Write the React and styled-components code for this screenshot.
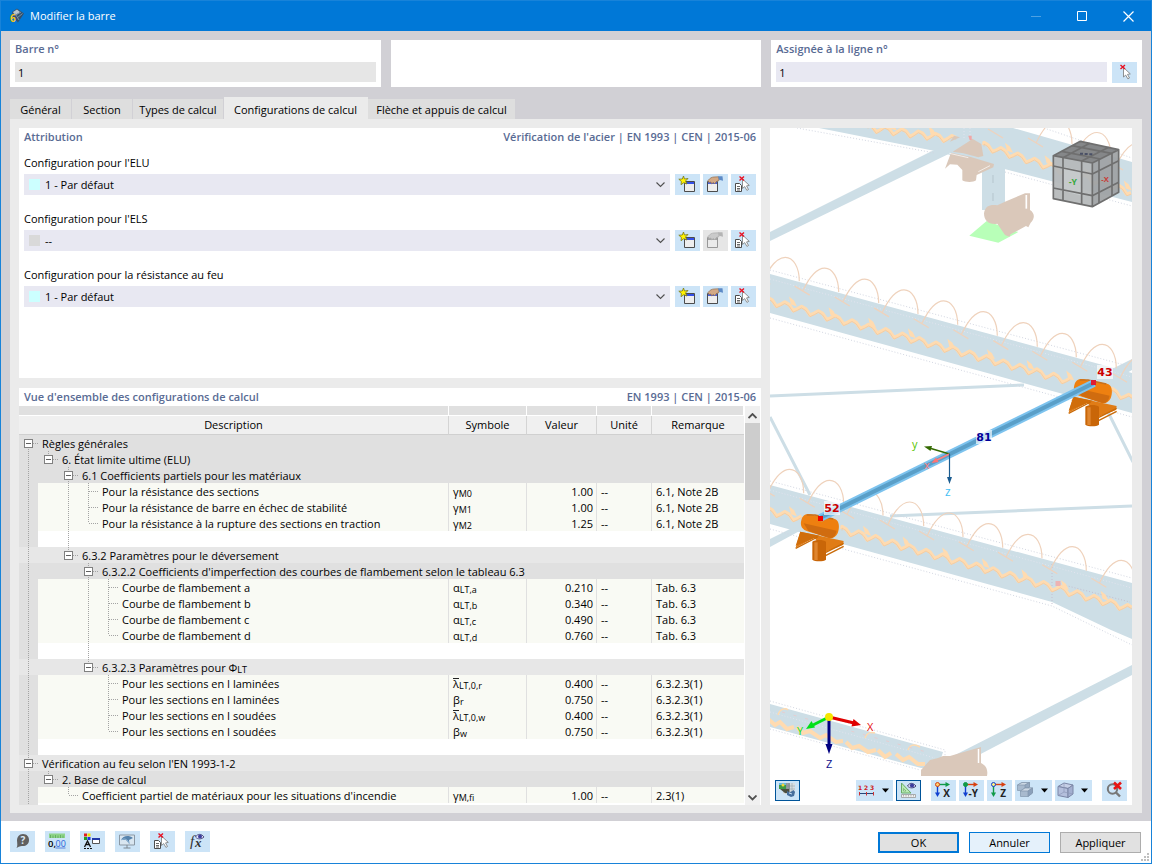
import React from "react";
import styled, { createGlobalStyle, css } from "styled-components";

const GlobalStyle = createGlobalStyle`
  * {
    box-sizing: border-box;
  }

  body {
    margin: 0;
    background: #d1d0d5;
    color: #000;
    font-family: "Open Sans", "Noto Sans", sans-serif;
    font-size: 11px;
    line-height: 16px;
  }

  button, input, select {
    font: inherit;
    color: inherit;
  }
`;

const Window = styled.div`
  display: flex;
  flex-direction: column;
  height: 100vh;
  min-height: 600px;
  border: 1px solid #1883d9;
`;

const TitleBar = styled.header`
  display: flex;
  align-items: center;
  height: 30px;
  flex: none;
  padding-left: 8px;
  background: #0078d7;
  color: white;
`;

const Caption = styled.h1`
  flex: 1;
  margin: 0 0 0 5px;
  font-size: 11px;
  font-weight: 400;
`;

const CaptionButton = styled.button`
  width: 46px;
  height: 30px;
  padding: 0;
  border: 0;
  background: none;
  opacity: ${({ $dim }) => ($dim ? 0.3 : 1)};

  svg {
    display: block;
    margin: auto;
  }
`;

const TopRow = styled.div`
  display: grid;
  grid-template-columns: repeat(3, minmax(0, 1fr));
  gap: 10px;
  flex: none;
  height: 47px;
  margin: 9px 9px 10px;
`;

const Panel = styled.section`
  background: white;
  padding: 0 5px;
`;

const PanelHeader = styled.div`
  display: flex;
  justify-content: space-between;
  height: 18px;
  line-height: 18px;
  color: #596b94;
  font-weight: 600;
`;

const PanelTitle = styled.h2`
  margin: 0;
  font-size: 11px;
  font-weight: 600;
`;

const FieldRow = styled.div`
  display: flex;
  gap: 5px;
  padding-top: 4px;
`;

const TextInput = styled.input`
  flex: 1;
  min-width: 0;
  height: 20px;
  padding: 1px 3px 0;
  border: 0;
  border-radius: 0;
  background: ${(props) => (props.readOnly ? "#e6e6e6" : "#e8e8f2")};
`;

const IconButton = styled.button`
  display: flex;
  align-items: center;
  justify-content: center;
  flex: none;
  width: ${({ $wide }) => ($wide ? "37px" : "25px")};
  height: 21px;
  padding: 0;
  border: 0;
  background: #cce4f7;

  &:disabled {
    background: #e6e6e6;
    filter: grayscale(1);
  }

  &:disabled svg {
    opacity: 0.5;
  }

  ${({ $active }) =>
    $active &&
    css`
      box-shadow: inset 0 0 0 1px #005499;
    `}
`;

const Tabs = styled.nav`
  display: flex;
  align-items: flex-end;
  flex: none;
  height: 22px;
  margin: 0 9px;
`;

const Tab = styled.button`
  height: ${({ $active }) => ($active ? "22px" : "20px")};
  padding: ${({ $active }) => ($active ? "4px 0 0" : "2px 0 0")};
  width: ${({ $width }) => $width}px;
  border: 0;
  border-right: 1px solid ${({ $active }) => ($active ? "#ebebeb" : "#d1d0d5")};
  background: ${({ $active }) => ($active ? "#ebebeb" : "#dedede")};
  white-space: nowrap;
`;

const Content = styled.main`
  display: grid;
  grid-template-columns: minmax(0, 1fr) 362px;
  gap: 9px;
  flex: 1;
  min-height: 0;
  margin: 0 9px 8px;
  padding: 9px 10px 8px 9px;
  background: #ebebeb;
`;

const LeftColumn = styled.div`
  display: grid;
  grid-template-rows: 250px minmax(0, 1fr);
  gap: 10px;
  min-height: 0;
`;

const ConfigField = styled.div`
  margin-top: 9px;
  padding-bottom: 10px;

  & + & {
    margin-top: 0;
  }
`;

const FieldLabel = styled.label`
  display: block;
  height: 19px;
  line-height: 16px;
`;

const FieldControls = styled.div`
  display: flex;
  gap: 3px;
  height: 27px;
`;

const SelectBox = styled.div`
  display: flex;
  align-items: center;
  flex: 1;
  height: 21px;
  margin-right: 2px;
  padding: 0 5px;
  background: #e8e8f2;
`;

const Swatch = styled.span`
  width: 11px;
  height: 11px;
  margin-right: 5px;
  background: ${({ $color }) => $color};
`;

const Select = styled.select`
  flex: 1;
  height: 21px;
  padding: 0;
  border: 0;
  background: none;
  appearance: none;
`;

const Overview = styled.section`
  display: flex;
  flex-direction: column;
  min-height: 0;
  background: white;

  ${PanelHeader} {
    flex: none;
    padding: 0 5px;
  }
`;

const TableArea = styled.div`
  display: flex;
  flex: 1;
  min-height: 0;
  gap: 1px;
  padding-right: 1px;
`;

const TableClip = styled.div`
  flex: 1;
  min-width: 0;
  overflow: hidden;
`;

const Table = styled.table`
  width: 100%;
  table-layout: fixed;
  border-collapse: separate;
  border-spacing: 0;

  td {
    height: 16px;
    padding: 0;
    white-space: nowrap;
    line-height: 15px;
  }
`;

const TopCell = styled.td`
  border-bottom: 1px solid white;
  border-right: 1px solid white;
  background: #e0e0e0;

  && {
    height: 10px;
    line-height: 9px;
  }
`;

const HeadCell = styled.th`
  height: 19px;
  padding: 0;
  border-right: 1px solid #d4d4d4;
  border-bottom: 1px solid #d0d0d0;
  background: #f0f0f0;
  font-weight: 400;
  line-height: 18px;

  &:last-child {
    border-right: 0;
  }
`;

const GroupCell = styled.td`
  background: ${({ $light }) => ($light ? "#e7e7e7" : "#e0e0e0")};
`;

const Cell = styled.td`
  overflow: hidden;
  border-right: 1px solid #e0e0e0;
  background: #f9faf4;
  text-align: ${({ $align }) => $align || "left"};

  && {
    padding: ${({ $flush }) => ($flush ? "0" : "1px 3px 0 4px")};
  }

  &:last-child {
    border-right: 0;
  }
`;

const TreeLine = styled.div`
  display: flex;
  height: 16px;
`;

const vertical = "repeating-linear-gradient(#a4a4a4 0 1px, transparent 1px 2px)";
const horizontal =
  "repeating-linear-gradient(90deg, #a4a4a4 0 1px, transparent 1px 2px)";

const Guide = styled.span`
  display: flex;
  align-items: center;
  flex: none;
  width: ${({ $first }) => ($first ? "19px" : "20px")};
  height: 16px;
  padding-left: ${({ $first }) => ($first ? "5px" : "6px")};
  background-color: ${({ $first, $leaf }) =>
    $first && $leaf ? "#e0e0e0" : "transparent"};
  background-image: ${({ $up, $down, $branch }) =>
    [
      $up ? vertical : "none",
      $down ? vertical : "none",
      $branch ? horizontal : "none",
    ].join(", ")};
  background-repeat: no-repeat;
  background-size: 1px 8px, 1px 8px, 10px 1px;
  background-position: ${({ $first }) =>
    $first ? "9px 0, 9px 8px, 10px 8px" : "10px 0, 10px 8px, 11px 8px"};
`;

const Toggle = styled.button`
  width: 9px;
  height: 9px;
  padding: 0;
  border: 1px solid #808080;
  background: linear-gradient(#606060, #606060) center / 5px 1px no-repeat white;
`;

const TreeText = styled.span`
  padding-left: 4px;
  line-height: 17px;
`;

const Sub = styled.span`
  font-size: 9px;
  line-height: 8px;
  vertical-align: -1px;
`;

const Barred = styled.span`
  display: inline-block;
  height: 11px;
  border-top: 1px solid #222;
  line-height: 10px;
`;

const ScrollBar = styled.div`
  display: flex;
  flex-direction: column;
  width: 15px;
  background: #f0f0f0;
`;

const ScrollButton = styled.button`
  height: 17px;
  padding: 0;
  border: 0;
  background: none;
`;

const ScrollTrack = styled.div`
  flex: 1;
`;

const ScrollThumb = styled.div`
  height: 77px;
  background: #cdcdcd;
`;

const Viewer = styled.section`
  display: flex;
  flex-direction: column;
  min-height: 0;
  background: white;
`;

const Scene = styled.svg`
  display: block;
  flex: 1;
  min-height: 0;
  width: 100%;
`;

const ViewerTools = styled.div`
  display: flex;
  flex: none;
  gap: 3px;
  padding: 4px 5px;
`;

const ToolGroup = styled.div`
  display: flex;
  gap: 3px;
  margin-left: ${({ $push }) => ($push ? "auto" : "7px")};
`;

const Footer = styled.footer`
  display: flex;
  flex: none;
  height: 42px;
  padding: 10px 0 0 9px;
  background: white;
`;

const FooterTools = styled.div`
  display: flex;
  gap: 10px;
  flex: 1;
`;

const FooterButtons = styled.div`
  display: flex;
  gap: 10px;
  padding-top: 1px;
`;

const DialogButton = styled.button`
  width: 81px;
  height: 21px;
  padding: 0;
  border: ${({ $kind }) =>
    $kind === "default"
      ? "2px solid #0078d7"
      : $kind === "hover"
      ? "1px solid #0078d7"
      : "1px solid #adadad"};
  background: ${({ $kind }) => ($kind === "hover" ? "#e5f1fb" : "#e1e1e1")};
`;

const Grip = styled.svg`
  align-self: flex-end;
  margin: 0 1px 1px 0;
`;

/* ---------- icons, all on the 25 x 21 button grid ---------- */

const Icon = ({ children, width = 25 }) => (
  <svg width={width} height="21" viewBox={`0 0 ${width} 21`} aria-hidden="true">
    {children}
  </svg>
);

const Pointer = ({ x, y }) => (
  <path
    transform={`translate(${x} ${y})`}
    d="M0 0V9.5L2.2 7.6L4.4 11.4L6 10.5L4 6.9L6.8 6.4Z"
    fill="white"
    stroke="#777"
    strokeWidth=".8"
  />
);

const RedCross = ({ x, y }) => (
  <path d={`M${x} ${y}l4.500 4m0 -4l-4.500 4`} stroke="#e81123" strokeWidth="1.4" />
);

const SheetLines = ({ x, y }) => (
  <g transform={`translate(${x} ${y})`}>
    <path d="M.5 .5H4.5L6.5 2.5V8.5H.5Z" fill="white" stroke="#4c4c4c" />
    <path d="M2 3.5H5M2 5.5H5M2 7H5" stroke="#444" strokeWidth=".8" />
  </g>
);

const PickIcon = () => (
  <Icon>
    <Pointer x={11.5} y={5.5} />
    <RedCross x={8.5} y={3} />
  </Icon>
);

const PickSheetIcon = () => (
  <Icon>
    <SheetLines x={4} y={9} />
    <Pointer x={11.5} y={5} />
    <RedCross x={8.5} y={2.5} />
  </Icon>
);

const NewIcon = () => (
  <Icon>
    <path d="M9.5 7.5H19.5V17.5H9.5Z" fill="#eee" stroke="#4c4c4c" />
    <path d="M10 8H19V10H10Z" fill="#3350e8" />
    <path
      d="M8.500 2L9.500 5L13 4.500L10.500 7L12 10L8.800 8.700L6 10.700L6.400 7.500L3.800 5.200L7.300 5Z"
      fill="#fff200"
      stroke="#77771c"
      strokeWidth=".8"
    />
  </Icon>
);

const EditIcon = () => (
  <Icon>
    <path d="M4.5 7.5H14.5V17.5H4.5Z" fill="#eee" stroke="#4c4c4c" />
    <path d="M5 8H14V10H5Z" fill="#4a62dd" />
    <path
      d="M5 6.5C7 4 9 3 11 3L15.5 2.8L16 6.5L13.5 7.5L11.5 10L10.5 8.5L8.5 9.8L8 8L6 8.5Z"
      fill="#d3a985"
      stroke="#8f6c4d"
      strokeWidth=".7"
    />
    <path d="M15 2.2H19.5L20 6.8L16 5.8Z" fill="#5d8ac6" />
  </Icon>
);

const HelpIcon = () => (
  <Icon>
    <path
      d="M13 3C17 3 19 6 19 9C19 13 16 15 13 15C11.5 15 10 15 6.5 17C7.8 14.8 7.2 13 7 9.5C7 6 9 3 13 3Z"
      fill="#606060"
    />
    <text x="10.5" y="12.7" fontSize="10" fontWeight="700" fill="#dcebf7">?</text>
  </Icon>
);

const UnitsIcon = () => (
  <Icon>
    <path d="M4 2.5H20V7H4Z" fill="#8fd48a" />
    <path d="M5.5 4V7M8 4.5V7M10.5 4V7M13 4.5V7M15.5 4V7M18 4.5V7" stroke="#5ba858" strokeWidth=".8" />
    <text x="3" y="15.5" fontSize="9.5" fontWeight="600">0,</text>
    <text x="10.5" y="15.5" fontSize="9" fill="#2563d9">00</text>
    <path d="M10.5 17H20.5" stroke="#5b82d9" />
  </Icon>
);

const DisplayIcon = () => (
  <Icon>
    <path d="M4 2.5H7V5.5H4Z" fill="#e02020" />
    <path d="M7.5 2.5H10.5V5.5H7.5Z" fill="#f0e000" />
    <path d="M4 6H7V9H4Z" fill="#20a020" />
    <path d="M7.5 6H10.5V9H7.5Z" fill="#2030e0" />
    <path d="M4.5 16L7.5 10L10.5 16M5.5 13.5H9.5" stroke="#111" strokeWidth="1.3" fill="none" />
    <path d="M4 17.5H12" stroke="#111" strokeDasharray="2 1" />
    <path d="M12.5 7.5H19.5V12.5H12.5Z" fill="white" stroke="#555" />
    <path d="M12 8H20" stroke="#2238a8" strokeWidth="2" />
  </Icon>
);

const MonitorIcon = () => (
  <Icon>
    <path d="M4.5 4H19.5V14H4.5Z" fill="#d9e6f0" stroke="#8b98a4" />
    <path d="M12 14V17M8.5 17H15.5" stroke="#7d8790" />
    <path d="M6 9C8 5 13 3.5 18 7L14 9L14.5 13L11 9Z" fill="#5583ad" />
    <path d="M6 9C10 7 12 8 14.5 13" stroke="#a2c3df" fill="none" />
  </Icon>
);

const FormulaIcon = () => (
  <Icon>
    <text x="5" y="15" fontFamily="Liberation Serif" fontSize="15" fontStyle="italic" fill="#333">
      f
    </text>
    <text x="10" y="16" fontFamily="Liberation Serif" fontSize="13" fontStyle="italic" fontWeight="700" fill="#333">
      x
    </text>
    <path d="M10.5 6C12.5 2.5 16.5 2.5 19 6C16.5 8.5 12.5 8.5 10.5 6Z" fill="#e4e4fa" stroke="#444477" strokeWidth=".9" />
    <circle cx="15" cy="5.5" r="2" fill="#3c3c9c" />
  </Icon>
);

const RenderIcon = () => (
  <Icon>
    <path d="M8 3H20V14H8Z" fill="#d8dee2" />
    <path d="M11 3V14M14 3V14M17 3V14M8 6H20M8 9H20M8 12H20" stroke="#9aa4ab" strokeWidth=".6" />
    <path d="M4 3H11V9H4Z" fill="#3d9a46" />
    <path d="M4 3H11V5H4Z" fill="#67b8e0" />
    <circle cx="8" cy="5" r="1.5" fill="#f6d736" />
    <path d="M11 3H15V12H11Z" fill="#6c7378" opacity=".6" />
    <path d="M5 9H14V13H10Z" fill="#4c4f3f" />
    <path d="M12 11L15 12.5L18.500 10L20 12L19 16L16 17L12 15Z" fill="#456e9d" />
    <path d="M14 13L17 14" stroke="#c5dbee" />
  </Icon>
);

const NumberingIcon = () => (
  <Icon>
    <g fontFamily="DejaVu Sans" fontSize="6" fontWeight="700" fill="#cc2020">
      <text x="2" y="10">1</text>
      <text x="8" y="10">2</text>
      <text x="14" y="10">3</text>
    </g>
    <path d="M3 13.5H18" stroke="#25457a" />
    <path d="M3.5 12V15.5M10.5 12V15.5M17.5 12V15.5" stroke="#d03030" />
  </Icon>
);

const MeasureIcon = () => (
  <Icon>
    <path d="M5.5 3L15 13H5.5Z" fill="#b9eab5" stroke="#6aab66" />
    <path d="M7.5 8.5L10 11H7.5Z" fill="#e9f7e8" stroke="#6aab66" strokeWidth=".7" />
    <path d="M5.5 14.5H19.5V17.5H5.5Z" fill="#f1f1f1" stroke="#999" strokeWidth=".8" />
    <path d="M7.5 15V16.5M10 15V16.5M12.5 15V16.5M15 15V16.5M17.5 15V16.5" stroke="#888" strokeWidth=".6" />
    <path d="M11.5 6C13.5 2.5 17 2.5 20 6C17.5 8.5 14 8.5 11.5 6Z" fill="#e4e4fa" stroke="#444477" />
    <circle cx="16" cy="5.5" r="2.1" fill="#3c3c9c" />
  </Icon>
);

const AxisIcon = ({ label, dot, right, down }) => (
  <Icon>
    <path d="M6.5 4.5H16" stroke={right} strokeWidth="1.4" />
    <path d="M14.5 2L19 4.5L14.5 7Z" fill={right} />
    <path d="M6.5 4.5V14" stroke={down} strokeWidth="1.4" />
    <path d="M4 12.5L6.5 17L9 12.5Z" fill={down} />
    <circle cx="6.5" cy="4.5" r="2" fill={dot} stroke={dot === "#fff080" ? "#1040d0" : dot === "#ffd070" ? "#d84010" : dot} />
    <text x="19" y="16.5" textAnchor="end" fontSize="10" fontWeight="700" fill="#222">
      {label}
    </text>
  </Icon>
);

const SolidIcon = () => (
  <Icon>
    <g stroke="#8296ae" strokeWidth=".7">
      <path d="M2.5 5L7 2.5H14.5V7L10 10.500H2.5Z" fill="#a8bace" />
      <path d="M2.5 5L7 2.5H14.5L10 5Z" fill="#ccd8e4" />
      <path d="M10 5L14.500 2.500V7L10 10.500Z" fill="#94a8c0" />
      <path d="M5.5 11L10 8H17.5V13L13 16.500H5.500Z" fill="#a8bace" />
      <path d="M5.5 11L10 8H17.5L13 11Z" fill="#ccd8e4" />
      <path d="M13 11L17.5 8V13L13 16.500Z" fill="#8ba0ba" />
    </g>
  </Icon>
);

const BoxIcon = () => (
  <Icon>
    <path d="M3 6.500L9 3L18 5L13 8.500Z" fill="#c6cfe6" stroke="#7b86a6" />
    <path d="M3 6.500L13 8.500V17.500L3 15.500Z" fill="#b4bfdc" stroke="#7b86a6" />
    <path d="M13 8.500L18 5V14L13 17.500Z" fill="#a3afd0" stroke="#7b86a6" />
    <path d="M9 3V12L18 14M9 12L3 15.500" fill="none" stroke="#8d98b8" strokeWidth=".7" />
  </Icon>
);

const ResetIcon = () => (
  <Icon>
    <circle cx="10.5" cy="9" r="4.7" fill="none" stroke="#777" strokeWidth="2" />
    <path d="M13.5 12L18 16.5" stroke="#777" strokeWidth="2.4" />
    <path d="M12 2.5L19 9M19 2.5L12 9" stroke="#e81414" strokeWidth="2.6" />
  </Icon>
);

const DropArrow = () => (
  <svg width="12" height="21" viewBox="0 0 12 21" aria-hidden="true">
    <path d="M1 8.5H8L4.5 12.5Z" fill="#000" />
  </svg>
);

const Chevron = ({ up }) => (
  <svg width="9" height="6" viewBox="0 0 9 6" aria-hidden="true">
    <path
      d={up ? "M.5 5L4.5 1L8.5 5" : "M.5 .5L4.5 4.5L8.5 .5"}
      fill="none"
      stroke="#505050"
      strokeWidth={up === undefined ? 1.1 : 1.8}
    />
  </svg>
);

const AppIcon = () => (
  <svg width="16" height="16" viewBox="0 0 16 16" aria-hidden="true">
    <path d="M3 4L8 .5L15 5.5L9 14.5L4 9Z" fill="#34516d" />
    <path d="M4 4L8 1.5L11 4L6 7.5Z" fill="#b8c5ce" />
    <path d="M7 7L12 4M8 10L13.5 5.5M6 5.5L10 12" stroke="#7993a8" />
    <text x="1" y="14" fontSize="10" fontWeight="700" fill="#f5c518">6</text>
  </svg>
);

/* ---------- 3D view ---------- */

const steel = "#cddee6";
const sand = "#ffdbb0";

const arch = "M-22 23C-14 6 -6 0 0 0C8 0 14 10 14 24M-30 18L-15 27";

const upperArches = [785.3, 824.7, 864.7, 904, 943.7, 983.3, 1023.3, 1062.3, 1102.3, 1142].map(
  (x) => [x, 257.3 + (x - 785.3) * 0.2745]
);

const lowerArches = [
  [789.7, 469.3], [829.7, 480.3], [869, 491.5], [909.7, 502], [949, 513],
  [988.7, 523.7], [1028, 534.3], [1072.3, 546.7], [1121.3, 560.3],
];

// Zigzag strip that runs along a member
function loadPath(x1, y1, x2, y2) {
  const slope = (y2 - y1) / (x2 - x1);
  let d = `M${x1} ${y1}`;
  for (let x = x1, i = 0; x < x2; x += 4.2, i++) {
    const offset = [-2.5, -1, 4, 1][i % 4];
    d += `L${x.toFixed(1)} ${(y1 + (x - x1) * slope + offset).toFixed(1)}`;
  }
  return d;
}

// Small arrow stubs, one at every load point of the member
function nodesPath(x1, y1, x2, y2) {
  const slope = (y2 - y1) / (x2 - x1);
  let d = "";
  for (let x = x1 + 21; x < x2; x += 39.6) {
    d += `M${x} ${y1 + (x - x1) * slope - 9}l5 4l3 6l-6 -2z`;
  }
  return d;
}

const Load = ({ line }) => (
  <g>
    <path d={loadPath(...line)} fill="none" stroke={sand} strokeWidth="3.5" strokeLinejoin="round" />
    <path d={loadPath(...line)} fill="none" stroke="#efc9a2" strokeWidth=".8" transform="translate(0 1.5)" />
    <path d={nodesPath(...line)} fill={sand} />
  </g>
);

const Support = ({ x, y }) => (
  <g transform={`translate(${x} ${y}) scale(.33333)`}>
    <path d="M916 440L1046 468L1044 480L992 500L958 458L902 488Z" fill="#e07c16" />
    <path d="M916 440L975 452L902 482Z" fill="#d06d0a" />
    <path d="M902 490L968 456M985 506L1046 475M987 514L1046 484" stroke="#c96a08" strokeWidth="4" />
    <path d="M952 470C960 463 985 463 993 470V524C985 530 960 530 952 524Z" fill="#c96608" />
    <path d="M958 472H968V525H958Z" fill="#df8630" />
    <path d="M920 402C925 385 945 385 955 390L1020 402C1034 407 1034 430 1028 445C1020 462 1005 462 995 457L935 438C915 430 916 415 920 402Z" fill="#ee8010" />
    <path d="M926 415L1025 437C1020 460 1008 462 995 457L940 438Z" fill="#d06c10" />
    <path d="M935 390L960 390L1015 402" fill="none" stroke="#c7711e" strokeWidth="5" />
  </g>
);

const Tag = ({ x, y, color, children }) => (
  <g>
    <rect x={x - 8} y={y - 7} width="16" height="14" fill="white" opacity=".65" />
    <text x={x} y={y + 4} textAnchor="middle" fontFamily="DejaVu Sans" fontSize="11" fontWeight="700" fill={color}>
      {children}
    </text>
  </g>
);

const ModelView = () => (
  <Scene viewBox="770 128 362 648" preserveAspectRatio="xMidYMin slice" role="img" aria-label="Vue 3D de la barre">
    <g fill={steel}>
      <path d="M819 128H1013L1132 162V202L993 166L935 151Z" />
      <path d="M770 232L932 151L957 140L965 146L770 241Z" />
      <path d="M982 160H1005V210H982Z" />
      <path d="M770 274L1132 373V413L770 313Z" />
      <path d="M1114 368L1132 359V370L1120 377Z" />
      <path d="M770 485L1132 583V639L1111 630L1052 602L770 524Z" />
      <path d="M770 539L792 528L807 527L770 547Z" />
      <path d="M770 704L943 752L938 768H921L770 727Z" />
      <path d="M1132 665V675L975 757L955 755Z" />
    </g>
    <g stroke={steel} strokeWidth="3">
      <path d="M770 396L1024 385M770 417L810 495M1108 412L1133 462M890 516L1132 506" />
    </g>
    <g stroke="#d3d7e2" strokeDasharray="1 2" fill="none">
      <path d="M797 128L935 153M1005 172L1132 206M1044 128L1132 158" />
      <path d="M770 270L1132 367M770 318L1132 417" />
      <path d="M770 481L1132 578M770 529L1052 606L1132 645" />
      <path d="M770 701L945 750V756M770 729L920 770" />
      <path d="M993 175V205" strokeDasharray="8 10" stroke="#b5c5cd" />
      <path d="M770 279L1132 377M770 490L1132 588M770 712L935 758M964 128V140M970 128V140" stroke="#e2e4ef" />
      <path d="M1060 584L1130 602M1052 564V606" stroke="#c5bfd0" />
    </g>

    <g fill="none" stroke="#efd2bc" strokeWidth="1.2">
      {upperArches.map(([x, y]) => (
        <path key={x} d={arch} transform={`translate(${x} ${y})`} />
      ))}
      {lowerArches.map(([x, y]) => (
        <path key={x} d={arch} transform={`translate(${x} ${y})`} />
      ))}
      <path d={arch} transform="translate(1058 120)" />
      <path d={arch} transform="translate(1097 132.5)" />
      <path d={arch} transform="translate(1138 143)" />
      <path d="M988 129L1003 138" />
    </g>
    <Load line={[868, 127, 958, 139]} />
    <Load line={[984, 145, 1132, 192]} />
    <Load line={[768, 300, 1072, 381]} />
    <Load line={[1112, 391, 1134, 399]} />
    <Load line={[768, 510, 804, 519]} />
    <Load line={[842, 529, 1134, 609]} />
    <g fill="none" stroke={sand} strokeWidth="4">
      <path d="M768 719L775 725L780 722L787 729L794 727M797 727L803 733L810 731L820 738L826 735L836 742L843 741M846 742L852 748L859 746L868 752L876 750M878 750L885 757L891 753M896 754L903 760L909 757L918 764L925 764" />
      <path d="M778 715C780 708 786 708 788 710M865 738C867 732 872 732 875 733M908 750C910 744 915 744 920 747" strokeWidth="1.5" />
    </g>
    <path d="M782 712L930 753" stroke="#e6cdd0" strokeDasharray="3 9" />

    <g transform="translate(760 0) scale(.33333)">
      <path d="M628 707L680 663L775 696L715 728Z" fill="#b8ffb8" />
      <g fill="#dac8ba">
        <path d="M555 506L573 458L630 470L702 492L700 502L650 525L648 541C640 548 615 547 607 541V510L592 494L570 493Z" />
        <path d="M578 455L625 425L637 416L664 432L670 468L655 472L610 460Z" />
        <path d="M570 425L582 407L600 412Z" />
        <path d="M672 640C675 618 690 613 712 616L735 605L795 580H810V630C825 640 825 655 812 668L805 682L798 678L752 703L748 710L735 705L712 671C690 675 672 665 672 640Z" />
      </g>
      <path d="M799 585V626" stroke="white" strokeWidth="5" />
      <path d="M568 460L625 473M655 515L690 497" stroke="white" strokeWidth="2" />
      <path d="M625 407H635V420H629Z" fill="#f1a7a7" />
    </g>

    <g transform="translate(760 0) scale(.33333)" strokeLinejoin="round">
      <path d="M880 467L961 424L1076 449L997 489Z" fill="#858789" />
      <path d="M880 467L997 489V620L880 596Z" fill="#b6b9ba" fillOpacity=".94" />
      <path d="M997 489L1076 449V577L997 620Z" fill="#9fa3a5" fillOpacity=".94" />
      <path d="M910 500L965 512V587L910 573Z" fill="#c6cacb" />
      <g fill="none" stroke="#6f6f6f" strokeWidth="5">
        <path d="M880 467L961 424L1076 449V577L997 620L880 596ZM880 467L997 489V620M997 489L1076 449" />
        <path d="M909 473V602M965 483V613M880 498L997 522L1076 482M880 564L997 587L1076 547M1017 479V609M1056 459V588" />
        <path d="M909 473L989 430M965 483L1046 442M905 454L1021 477M936 437L1054 460" />
      </g>
      <path d="M960 461L998 463" stroke="#4a5066" strokeWidth="6" strokeDasharray="9 5" />
      <text x="926" y="554" fontSize="26" fontWeight="700" fill="#37a83c">-Y</text>
      <text x="1024" y="547" fontSize="23" fontWeight="700" fill="#c83c36">-X</text>
    </g>

    <path d="M938 772L925 776H921V770L930 760L938 758L943 756L950 756L981 747V763C987 766 988 771 987 776H921Z" fill="#dac8ba" />
    <path d="M978.5 749V763" stroke="white" strokeWidth="1.5" />

    <Support x={495} y={385} />
    <Support x={768} y={250} />
    <path d="M820 518L1094 383" stroke="#7dc3ee" strokeWidth="8" />
    <path d="M820 518L1094 383" stroke="#5a9fc8" strokeWidth="4" />
    <path d="M818 516H823V521H818Z" fill="#f00000" />
    <path d="M1091 380H1096V385H1091Z" fill="#e01c30" />
    <path d="M1055.5 581H1060.5V586H1055.5Z" fill="#edb3b3" />

    <g fontSize="12">
      <path d="M949.5 454L931 448.5" stroke="#336a00" strokeWidth="1.5" />
      <path d="M924 446.5L932 446L930.5 451Z" fill="#336a00" />
      <path d="M949.5 454L937 460" stroke="#ff8080" strokeWidth="1.5" />
      <path d="M931.5 463L936 457.5L938.5 462Z" fill="#ff7474" />
      <path d="M949.5 454V479" stroke="#1b5c90" strokeWidth="1.2" />
      <path d="M947 477H952L949.5 484Z" fill="#1b5c90" />
      <text x="912" y="448" fontSize="11" fill="#58c400">y</text>
      <text x="924" y="469" fontSize="11" fill="#ff8080">x</text>
      <text x="945" y="496" fill="#44c0f4">z</text>
    </g>

    <Tag x={1105} y={372} color="#cc0000">43</Tag>
    <Tag x={832} y={508} color="#cc0000">52</Tag>
    <Tag x={984} y={437} color="#000099">81</Tag>

    <g fontSize="11">
      <path d="M829 717L854 723" stroke="#e00000" strokeWidth="3" />
      <path d="M861 725L851.5 726.5L853.5 719Z" fill="#e00000" />
      <path d="M829 717L813 725" stroke="#00e018" strokeWidth="3" />
      <path d="M806 729L811.5 721L815 727.5Z" fill="#00e018" />
      <path d="M829 717V746" stroke="#000080" strokeWidth="3" />
      <path d="M825.5 744H832.5L829 754Z" fill="#000080" />
      <circle cx="829" cy="717" r="4" fill="#f5e600" />
      <text x="867" y="731" fill="#e81010">X</text>
      <text x="797" y="735" fill="#10e020">Y</text>
      <text x="826" y="768" fill="#10108c">Z</text>
    </g>
  </Scene>
);

/* ---------- data ---------- */

const tabs = [
  { label: "Général", width: 62 },
  { label: "Section", width: 61 },
  { label: "Types de calcul", width: 91 },
  { label: "Configurations de calcul", width: 144, active: true },
  { label: "Flèche et appuis de calcul", width: 148 },
];

const configs = [
  { id: "elu", label: "Configuration pour l'ELU", value: "1 - Par défaut", color: "#ccffff" },
  { id: "els", label: "Configuration pour l'ELS", value: "--", color: "#d9d9d9", empty: true },
  { id: "feu", label: "Configuration pour la résistance au feu", value: "1 - Par défaut", color: "#ccffff" },
];

// guides: one letter per ancestor level, then the row's own one
// "|" passes through, "+" has a sibling below, "L" is the last, "v" is the first
const rows = [
  { group: true, guides: "v", text: "Règles générales" },
  { group: true, guides: "|L", text: "6. État limite ultime (ELU)" },
  { group: true, guides: "| +", text: "6.1 Coefficients partiels pour les matériaux" },
  { guides: "| |+", text: "Pour la résistance des sections", symbol: "γ", sub: "M0", value: "1.00", note: "6.1, Note 2B" },
  { guides: "| |+", text: "Pour la résistance de barre en échec de stabilité", symbol: "γ", sub: "M1", value: "1.00", note: "6.1, Note 2B" },
  { guides: "| |L", text: "Pour la résistance à la rupture des sections en traction", symbol: "γ", sub: "M2", value: "1.25", note: "6.1, Note 2B" },
  { blank: true, guides: "| |" },
  { group: true, light: true, guides: "| L", text: "6.3.2 Paramètres pour le déversement" },
  { group: true, guides: "|  +", text: "6.3.2.2 Coefficients d'imperfection des courbes de flambement selon le tableau 6.3" },
  { guides: "|  |+", text: "Courbe de flambement a", symbol: "α", sub: "LT,a", value: "0.210", note: "Tab. 6.3" },
  { guides: "|  |+", text: "Courbe de flambement b", symbol: "α", sub: "LT,b", value: "0.340", note: "Tab. 6.3" },
  { guides: "|  |+", text: "Courbe de flambement c", symbol: "α", sub: "LT,c", value: "0.490", note: "Tab. 6.3" },
  { guides: "|  |L", text: "Courbe de flambement d", symbol: "α", sub: "LT,d", value: "0.760", note: "Tab. 6.3" },
  { blank: true, guides: "|  |" },
  { group: true, light: true, guides: "|  L", text: "6.3.2.3 Paramètres pour Φ", textSub: "LT" },
  { guides: "|   +", text: "Pour les sections en I laminées", symbol: "λ", bar: true, sub: "LT,0,r", value: "0.400", note: "6.3.2.3(1)" },
  { guides: "|   +", text: "Pour les sections en I laminées", symbol: "β", sub: "r", value: "0.750", note: "6.3.2.3(1)" },
  { guides: "|   +", text: "Pour les sections en I soudées", symbol: "λ", bar: true, sub: "LT,0,w", value: "0.400", note: "6.3.2.3(1)" },
  { guides: "|   L", text: "Pour les sections en I soudées", symbol: "β", sub: "w", value: "0.750", note: "6.3.2.3(1)" },
  { blank: true, guides: "|" },
  { group: true, light: true, guides: "+", text: "Vérification au feu selon l'EN 1993-1-2" },
  { group: true, guides: "|L", text: "2. Base de calcul" },
  { guides: "| L", text: "Coefficient partiel de matériaux pour les situations d'incendie", symbol: "γ", sub: "M,fi", value: "1.00", note: "2.3(1)" },
  { blank: true, guides: "|" },
];

const Tree = ({ row }) => (
  <TreeLine>
    {row.guides.split("").map((kind, i, all) => {
      const own = !row.blank && i === all.length - 1;
      return (
        <Guide
          key={i}
          $first={i === 0}
          $leaf={!row.group}
          $up={"|+L".includes(kind)}
          $down={"|+v".includes(kind)}
          $branch={own}
        >
          {own && row.group && <Toggle aria-label="Réduire" />}
        </Guide>
      );
    })}
    {row.text && (
      <TreeText>
        {row.text}
        {row.textSub && <Sub>{row.textSub}</Sub>}
      </TreeText>
    )}
  </TreeLine>
);

const OverviewRow = ({ row }) => {
  if (row.group) {
    return (
      <tr>
        <GroupCell colSpan={5} $light={row.light}>
          <Tree row={row} />
        </GroupCell>
      </tr>
    );
  }
  if (row.blank) {
    return (
      <tr>
        <td colSpan={5}>
          <Tree row={row} />
        </td>
      </tr>
    );
  }
  return (
    <tr>
      <Cell $flush>
        <Tree row={row} />
      </Cell>
      <Cell>
        {row.bar ? <Barred>{row.symbol}</Barred> : row.symbol}
        <Sub>{row.sub}</Sub>
      </Cell>
      <Cell $align="right">{row.value}</Cell>
      <Cell>--</Cell>
      <Cell>{row.note}</Cell>
    </tr>
  );
};

const ConfigRow = ({ config }) => (
  <ConfigField>
    <FieldLabel htmlFor={config.id}>{config.label}</FieldLabel>
    <FieldControls>
      <SelectBox>
        <Swatch $color={config.color} />
        <Select id={config.id} defaultValue={config.value}>
          <option>{config.value}</option>
        </Select>
        <Chevron />
      </SelectBox>
      <IconButton aria-label="Nouvelle configuration"><NewIcon /></IconButton>
      <IconButton aria-label="Modifier la configuration" disabled={config.empty}><EditIcon /></IconButton>
      <IconButton aria-label="Sélectionner"><PickSheetIcon /></IconButton>
    </FieldControls>
  </ConfigField>
);

const App = () => (
  <>
    <GlobalStyle />
    <Window>
      <TitleBar>
        <AppIcon />
        <Caption>Modifier la barre</Caption>
        <CaptionButton $dim aria-label="Réduire">
          <svg width="11" height="11"><path d="M0 5.5H10" stroke="white" /></svg>
        </CaptionButton>
        <CaptionButton aria-label="Agrandir">
          <svg width="11" height="11"><path d="M.5 .5H9.5V9.5H.5Z" fill="none" stroke="white" /></svg>
        </CaptionButton>
        <CaptionButton aria-label="Fermer">
          <svg width="11" height="11"><path d="M.5 .5L10.5 10.5M10.5 .5L.5 10.5" stroke="white" strokeWidth="1.2" /></svg>
        </CaptionButton>
      </TitleBar>

      <TopRow>
        <Panel>
          <PanelHeader as="label" htmlFor="member">Barre n°</PanelHeader>
          <FieldRow>
            <TextInput id="member" defaultValue="1" readOnly />
          </FieldRow>
        </Panel>
        <Panel />
        <Panel>
          <PanelHeader as="label" htmlFor="line">Assignée à la ligne n°</PanelHeader>
          <FieldRow>
            <TextInput id="line" defaultValue="1" />
            <IconButton aria-label="Sélectionner la ligne"><PickIcon /></IconButton>
          </FieldRow>
        </Panel>
      </TopRow>

      <Tabs>
        {tabs.map((tab) => (
          <Tab key={tab.label} $active={tab.active} $width={tab.width}>
            {tab.label}
          </Tab>
        ))}
      </Tabs>

      <Content>
        <LeftColumn>
          <Panel>
            <PanelHeader>
              <PanelTitle>Attribution</PanelTitle>
              <span>Vérification de l'acier | EN 1993 | CEN | 2015-06</span>
            </PanelHeader>
            {configs.map((config) => (
              <ConfigRow key={config.id} config={config} />
            ))}
          </Panel>

          <Overview>
            <PanelHeader>
              <PanelTitle>Vue d'ensemble des configurations de calcul</PanelTitle>
              <span>EN 1993 | CEN | 2015-06</span>
            </PanelHeader>
            <TableArea>
              <TableClip>
                <Table>
                  <colgroup>
                    <col />
                    <col width="78" />
                    <col width="70" />
                    <col width="55" />
                    <col width="92" />
                  </colgroup>
                  <thead>
                    <tr>
                      <TopCell /><TopCell /><TopCell /><TopCell /><TopCell />
                    </tr>
                    <tr>
                      <HeadCell>Description</HeadCell>
                      <HeadCell>Symbole</HeadCell>
                      <HeadCell>Valeur</HeadCell>
                      <HeadCell>Unité</HeadCell>
                      <HeadCell>Remarque</HeadCell>
                    </tr>
                  </thead>
                  <tbody>
                    {rows.map((row, i) => (
                      <OverviewRow key={i} row={row} />
                    ))}
                  </tbody>
                </Table>
              </TableClip>
              <ScrollBar>
                <ScrollButton aria-label="Défiler vers le haut"><Chevron up /></ScrollButton>
                <ScrollTrack><ScrollThumb /></ScrollTrack>
                <ScrollButton aria-label="Défiler vers le bas"><Chevron up={false} /></ScrollButton>
              </ScrollBar>
            </TableArea>
          </Overview>
        </LeftColumn>

        <Viewer>
          <ModelView />
          <ViewerTools>
            <IconButton $active aria-label="Rendu"><RenderIcon /></IconButton>
            <ToolGroup $push>
              <IconButton $wide aria-label="Numérotation"><NumberingIcon /><DropArrow /></IconButton>
              <IconButton $active aria-label="Mesures"><MeasureIcon /></IconButton>
            </ToolGroup>
            <ToolGroup>
              <IconButton aria-label="Vue X"><AxisIcon label="X" dot="#ffd070" right="#109a48" down="#1040d0" /></IconButton>
              <IconButton aria-label="Vue -Y"><AxisIcon label="-Y" dot="#109a48" right="#d84010" down="#1040d0" /></IconButton>
              <IconButton aria-label="Vue Z"><AxisIcon label="Z" dot="#fff080" right="#d84010" down="#109a48" /></IconButton>
              <IconButton $wide aria-label="Vue en volume"><SolidIcon /><DropArrow /></IconButton>
              <IconButton $wide aria-label="Vue en perspective"><BoxIcon /><DropArrow /></IconButton>
            </ToolGroup>
            <ToolGroup>
              <IconButton aria-label="Réinitialiser la vue"><ResetIcon /></IconButton>
            </ToolGroup>
          </ViewerTools>
        </Viewer>
      </Content>

      <Footer>
        <FooterTools>
          <IconButton aria-label="Aide"><HelpIcon /></IconButton>
          <IconButton aria-label="Unités"><UnitsIcon /></IconButton>
          <IconButton aria-label="Affichage"><DisplayIcon /></IconButton>
          <IconButton aria-label="Vue"><MonitorIcon /></IconButton>
          <IconButton aria-label="Sélectionner"><PickSheetIcon /></IconButton>
          <IconButton aria-label="Formules"><FormulaIcon /></IconButton>
        </FooterTools>
        <FooterButtons>
          <DialogButton $kind="default">OK</DialogButton>
          <DialogButton $kind="hover">Annuler</DialogButton>
          <DialogButton>Appliquer</DialogButton>
        </FooterButtons>
        <Grip width="9" height="9" viewBox="0 0 9 9">
          <path d="M6 0H8V2H6ZM3 3H5V5H3ZM6 3H8V5H6ZM0 6H2V8H0ZM3 6H5V8H3ZM6 6H8V8H6Z" fill="#bfbfbf" />
        </Grip>
      </Footer>
    </Window>
  </>
);

export default App;
